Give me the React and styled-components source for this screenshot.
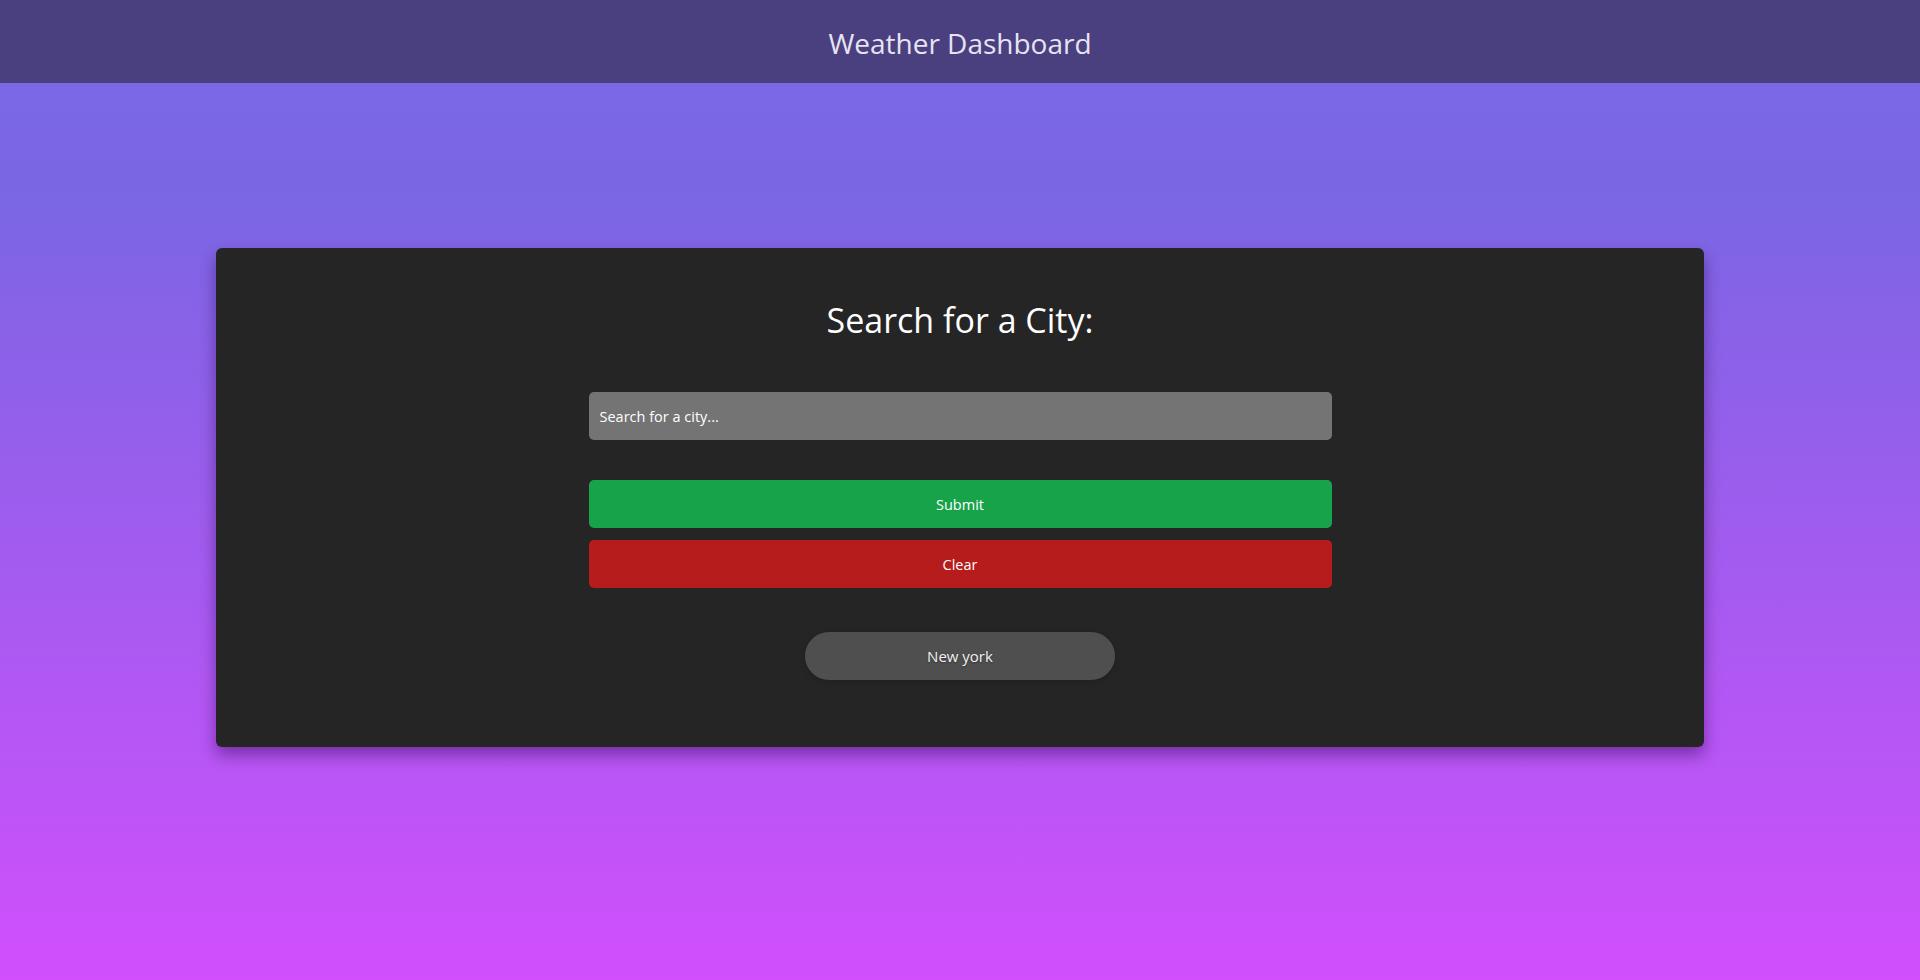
import React, { useState } from "react";
import styled, { createGlobalStyle } from "styled-components";

const GlobalStyle = createGlobalStyle`
  html, body {
    margin: 0;
    padding: 0;
  }
  body {
    min-height: 100vh;
    font-family: "Open Sans", "Noto Sans", "Liberation Sans", sans-serif;
    background: #d04ffc;
    color: #ffffff;
  }
  * { box-sizing: border-box; }
`;

const Page = styled.div`
  min-height: 100vh;
  display: flex;
  flex-direction: column;
`;

const Header = styled.header`
  height: 83px;
  flex: 0 0 auto;
  background: #4a4080;
  display: flex;
  align-items: center;
  justify-content: center;
`;

const HeaderTitle = styled.h1`
  margin: 0;
  font-size: 28px;
  font-weight: 400;
  color: #e7e3f1;
  transform: translateY(1px);
`;

const Main = styled.main`
  flex: 1;
  display: flex;
  justify-content: center;
  align-items: flex-start;
  padding-top: 165px;
  background: linear-gradient(to bottom, #7b68e6 0%, #7a66e3 12%, #d14ffd 100%);
`;

const Card = styled.section`
  width: 1488px;
  background: #252525;
  border-radius: 6px;
  box-shadow: 0 8px 16px rgba(40, 0, 70, 0.45);
  padding: 49px 0 67px;
  display: flex;
  flex-direction: column;
  align-items: center;
`;

const Title = styled.h2`
  margin: 0;
  font-size: 34px;
  line-height: 46px;
  font-weight: 400;
  color: #ffffff;
`;

const Form = styled.form`
  width: 743px;
  margin-top: 49px;
  display: flex;
  flex-direction: column;
`;

const SearchInput = styled.input`
  height: 48px;
  width: 100%;
  border: none;
  outline: none;
  border-radius: 5px;
  background: #747474;
  color: #ffffff;
  padding: 0 11px;
  font-family: inherit;
  font-size: 14.5px;
  &::placeholder {
    color: #ffffff;
    opacity: 1;
  }
`;

const Buttons = styled.div`
  margin-top: 40px;
  display: flex;
  flex-direction: column;
  gap: 12px;
`;

const ActionButton = styled.button`
  height: 48px;
  width: 100%;
  border: none;
  border-radius: 5px;
  background: ${(p) => (p.$variant === "danger" ? "#b71c1c" : "#17a34a")};
  color: #ffffff;
  font-family: inherit;
  font-size: 14.5px;
  cursor: pointer;
`;

const History = styled.div`
  margin-top: 44px;
  display: flex;
  flex-direction: column;
  align-items: center;
  gap: 12px;
`;

const HistoryPill = styled.button`
  width: 310px;
  height: 48px;
  border: none;
  border-radius: 24px;
  background: #4f4f4f;
  color: #f2f2f2;
  font-family: inherit;
  font-size: 15px;
  font-weight: 500;
  text-shadow: 0 1px 2px rgba(0, 0, 0, 0.35);
  box-shadow: 0 2px 6px rgba(0, 0, 0, 0.15);
  cursor: pointer;
`;

export default function App() {
  const [city, setCity] = useState("");
  const [history] = useState(["New york"]);

  return (
    <>
      <GlobalStyle />
      <Page>
        <Header>
          <HeaderTitle>Weather Dashboard</HeaderTitle>
        </Header>
        <Main>
          <Card>
            <Title>Search for a City:</Title>
            <Form onSubmit={(e) => e.preventDefault()}>
              <SearchInput
                type="text"
                placeholder="Search for a city..."
                value={city}
                onChange={(e) => setCity(e.target.value)}
              />
              <Buttons>
                <ActionButton type="submit">Submit</ActionButton>
                <ActionButton type="button" $variant="danger" onClick={() => setCity("")}>
                  Clear
                </ActionButton>
              </Buttons>
            </Form>
            <History>
              {history.map((c) => (
                <HistoryPill key={c} type="button">{c}</HistoryPill>
              ))}
            </History>
          </Card>
        </Main>
      </Page>
    </>
  );
}
